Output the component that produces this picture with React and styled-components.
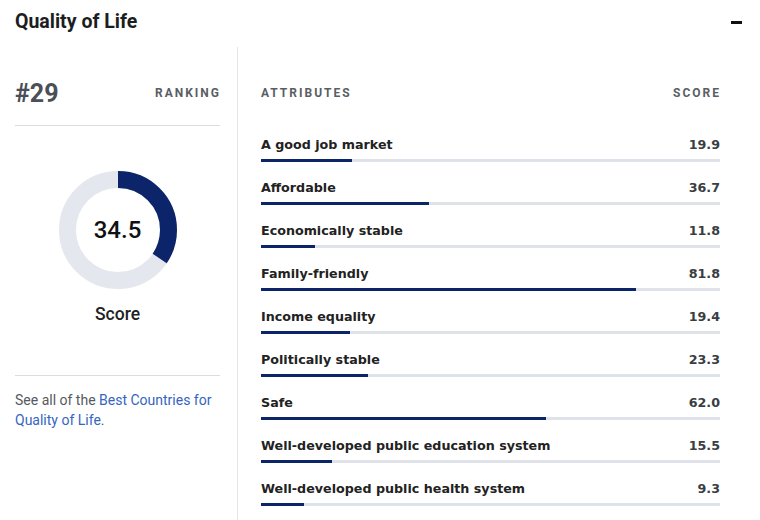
import React from 'react';
import styled, { createGlobalStyle } from 'styled-components';

const GlobalStyle = createGlobalStyle`
  body {
    margin: 0;
    background: #fff;
    font-family: Roboto, "Liberation Sans", sans-serif;
  }
`;

const Page = styled.div`
  width: 760px;
  height: 520px;
  overflow: hidden;
  background: #fff;
`;

const Header = styled.div`
  height: 47px;
  display: flex;
  align-items: flex-start;
  justify-content: space-between;
  padding: 0 18px 0 15px;
`;

const Title = styled.h2`
  margin: 11px 0 0;
  font-size: 19.5px;
  line-height: 22px;
  font-weight: 700;
  color: #1c1d1f;
`;

const Collapse = styled.span`
  display: block;
  width: 11px;
  height: 2.5px;
  margin-top: 21px;
  background: #111;
`;

const Body = styled.div`
  display: flex;
  height: 473px;
`;

const LeftCol = styled.div`
  width: 205px;
  padding: 0 17px 0 15px;
`;

const RankRow = styled.div`
  display: flex;
  align-items: center;
  justify-content: space-between;
  height: 32px;
  margin-top: 30px;
  padding-bottom: 16px;
  border-bottom: 1px solid #dcdcdc;
`;

const Rank = styled.span`
  font-size: 25px;
  font-weight: 700;
  color: #4b4f56;
`;

const Caps = styled.span`
  font-size: 12px;
  font-weight: 700;
  letter-spacing: 2px;
  margin-right: -1px;
  color: #5a5e64;
`;

const DonutWrap = styled.div`
  display: flex;
  flex-direction: column;
  align-items: center;
  padding: 45px 0 51px;
  border-bottom: 1px solid #dcdcdc;
`;

const Donut = styled.div`
  position: relative;
  width: 118px;
  height: 118px;
`;

const DonutValue = styled.span`
  position: absolute;
  inset: 0;
  display: flex;
  align-items: center;
  justify-content: center;
  font-size: 24px;
  font-weight: 500;
  color: #111;
`;

const ScoreLabel = styled.div`
  margin-top: 15px;
  font-size: 17.5px;
  line-height: 20px;
  font-weight: 500;
  color: #222;
`;

const Note = styled.p`
  margin: 14px 0 0;
  font-size: 14px;
  line-height: 20px;
  color: #555a60;
`;

const Link = styled.a`
  color: #3565c0;
  text-decoration: none;
`;

const RightCol = styled.div`
  flex: 1;
  border-left: 1px solid #e6e6e6;
  padding: 38px 40px 0 23px;
`;

const ListHead = styled.div`
  display: flex;
  justify-content: space-between;
  line-height: 16px;
  margin-bottom: 35px;
`;

const List = styled.div`
  display: flex;
  flex-direction: column;
  gap: 17px;
`;

const Row = styled.div`
  display: flex;
  flex-direction: column;
`;

const RowText = styled.div`
  display: flex;
  justify-content: space-between;
  font-family: "DejaVu Sans", sans-serif;
  font-size: 12.7px;
  line-height: 18px;
  font-weight: 700;
  color: #222;
`;

const Value = styled.span`
  color: #3a3d42;
`;

const Track = styled.div`
  height: 3px;
  margin-top: 5px;
  background: #dfe2e8;
`;

const Fill = styled.div`
  height: 100%;
  background: #0c2468;
`;

const attributes = [
  ['A good job market', 19.9],
  ['Affordable', 36.7],
  ['Economically stable', 11.8],
  ['Family-friendly', 81.8],
  ['Income equality', 19.4],
  ['Politically stable', 23.3],
  ['Safe', 62.0],
  ['Well-developed public education system', 15.5],
  ['Well-developed public health system', 9.3],
];

const ScoreDonut = ({ value }) => {
  const r = 50.5;
  const c = 2 * Math.PI * r;
  return (
    <Donut>
      <svg width="118" height="118" viewBox="0 0 118 118">
        <circle cx="59" cy="59" r={r} fill="none" stroke="#e4e7ee" strokeWidth="17" />
        <circle
          cx="59"
          cy="59"
          r={r}
          fill="none"
          stroke="#0b246a"
          strokeWidth="17"
          strokeDasharray={`${(c * value) / 100} ${c}`}
          transform="rotate(-90 59 59)"
        />
      </svg>
      <DonutValue>{value}</DonutValue>
    </Donut>
  );
};

export default function App() {
  return (
    <Page>
      <GlobalStyle />
      <Header>
        <Title>Quality of Life</Title>
        <Collapse />
      </Header>
      <Body>
        <LeftCol>
          <RankRow>
            <Rank>#29</Rank>
            <Caps>RANKING</Caps>
          </RankRow>
          <DonutWrap>
            <ScoreDonut value={34.5} />
            <ScoreLabel>Score</ScoreLabel>
          </DonutWrap>
          <Note>
            See all of the <Link href="#">Best Countries for Quality of Life</Link>.
          </Note>
        </LeftCol>
        <RightCol>
          <ListHead>
            <Caps>ATTRIBUTES</Caps>
            <Caps>SCORE</Caps>
          </ListHead>
          <List>
            {attributes.map(([name, score]) => (
              <Row key={name}>
                <RowText>
                  <span>{name}</span>
                  <Value>{score.toFixed(1)}</Value>
                </RowText>
                <Track>
                  <Fill style={{ width: `${score}%` }} />
                </Track>
              </Row>
            ))}
          </List>
        </RightCol>
      </Body>
    </Page>
  );
}
